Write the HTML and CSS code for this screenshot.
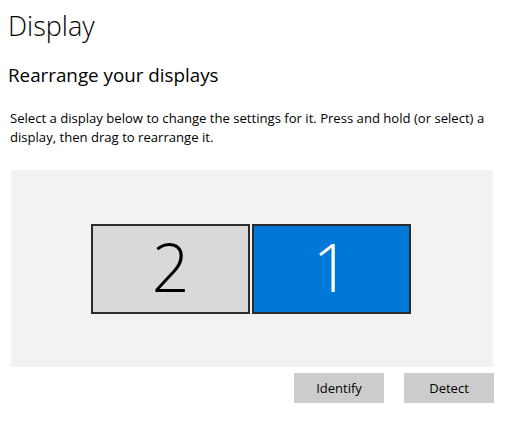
FILE: index.html
```html
<!DOCTYPE html>
<html lang="en">
<head>
<meta charset="utf-8">
<title>Display</title>
<link rel="stylesheet" href="styles.css">
</head>
<body>
<main class="page">
  <h1 class="title">Display</h1>
  <h2 class="subtitle">Rearrange your displays</h2>
  <p class="desc">Select a display below to change the settings for it. Press and hold (or select) a display, then drag to rearrange it.</p>
  <div class="canvas">
    <div class="monitors">
      <div class="monitor">2</div>
      <div class="monitor selected">1</div>
    </div>
  </div>
  <div class="actions">
    <button class="btn">Identify</button>
    <button class="btn">Detect</button>
  </div>
</main>
</body>
</html>
```

FILE: styles.css
```css
html, body {
  margin: 0;
  padding: 0;
  background: #ffffff;
}
body {
  font-family: "Open Sans", "Noto Sans", sans-serif;
  color: #000000;
}
.page {
  padding: 8px 0 0 8px;
  width: 486px;
}
.title {
  margin: 0;
  font-size: 27px;
  font-weight: 300;
  line-height: 36px;
}
.subtitle {
  margin: 18px 0 0 0;
  font-size: 18.8px;
  font-weight: 400;
  line-height: 26px;
}
.desc {
  margin: 21px 0 0 2px;
  font-size: 13.1px;
  line-height: 19px;
  width: 484px;
}
.canvas {
  box-sizing: border-box;
  margin: 23px 0 0 3px;
  padding-right: 2px;
  width: 482px;
  height: 197px;
  background: #f2f2f2;
  display: flex;
  align-items: center;
  justify-content: center;
}
.monitors {
  display: flex;
  gap: 2px;
  margin-top: 1px;
}
.monitor {
  box-sizing: border-box;
  width: 159px;
  height: 90px;
  padding-bottom: 6px;
  border: 2px solid #2b2b2b;
  background: #d9d9d9;
  color: #000000;
  display: flex;
  align-items: center;
  justify-content: center;
  font-size: 66px;
  font-weight: 300;
  line-height: 1;
}
.monitor.selected {
  background: #0078d7;
  color: #ffffff;
}
.actions {
  display: flex;
  justify-content: flex-end;
  gap: 20px;
  width: 486px;
  margin-top: 6px;
}
.btn {
  width: 90px;
  height: 30px;
  border: none;
  background: #cccccc;
  font-family: "Open Sans", "Noto Sans", sans-serif;
  font-size: 13px;
  color: #000000;
  padding: 0;
}
```
